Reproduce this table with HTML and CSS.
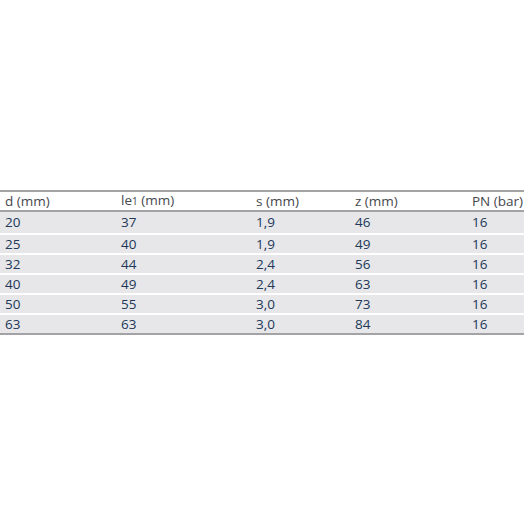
FILE: index.html
```html
<!DOCTYPE html>
<html>
<head>
<meta charset="utf-8">
<link rel="stylesheet" href="styles.css">
</head>
<body>
<div class="page">
<table class="spec">
<colgroup>
<col class="c1"><col class="c2"><col class="c3"><col class="c4"><col class="c5">
</colgroup>
<thead>
<tr><th>d (mm)</th><th>le<span class="sub">1</span> (mm)</th><th>s (mm)</th><th>z (mm)</th><th>PN (bar)</th></tr>
</thead>
<tbody>
<tr><td>20</td><td>37</td><td>1,9</td><td>46</td><td>16</td></tr>
<tr><td>25</td><td>40</td><td>1,9</td><td>49</td><td>16</td></tr>
<tr><td>32</td><td>44</td><td>2,4</td><td>56</td><td>16</td></tr>
<tr><td>40</td><td>49</td><td>2,4</td><td>63</td><td>16</td></tr>
<tr><td>50</td><td>55</td><td>3,0</td><td>73</td><td>16</td></tr>
<tr><td>63</td><td>63</td><td>3,0</td><td>84</td><td>16</td></tr>
</tbody>
</table>
</div>
</body>
</html>
```
FILE: styles.css
```css
html, body {
  margin: 0;
  padding: 0;
  background: #ffffff;
}
.page {
  padding-top: 190px;
}
.spec {
  width: 524px;
  border-collapse: collapse;
  table-layout: fixed;
  font-family: "Open Sans", "Noto Sans", sans-serif;
  font-size: 13.5px;
}
.c1 { width: 116px; }
.c2 { width: 135px; }
.c3 { width: 99px; }
.c4 { width: 117px; }
.c5 { width: 57px; }
.spec thead tr {
  border-top: 2px solid #a3a3a5;
  border-bottom: 2px solid #a3a3a5;
}
.spec th {
  text-align: left;
  font-weight: normal;
  color: #45474c;
  padding: 0 0 0 5px;
  height: 17px;
  line-height: 17px;
  white-space: nowrap;
}
.sub {
  font-size: 10px;
}
.spec td {
  background: #e7e7e9;
  color: #213858;
  padding: 0 0 0 5px;
  height: 18px;
  line-height: 18px;
  border-top: 2px solid #ffffff;
}
.spec tbody tr:first-child td {
  border-top: none;
  height: 19px;
  line-height: 21px;
}
.spec tbody tr:last-child {
  border-bottom: 2px solid #a3a3a5;
}
```
